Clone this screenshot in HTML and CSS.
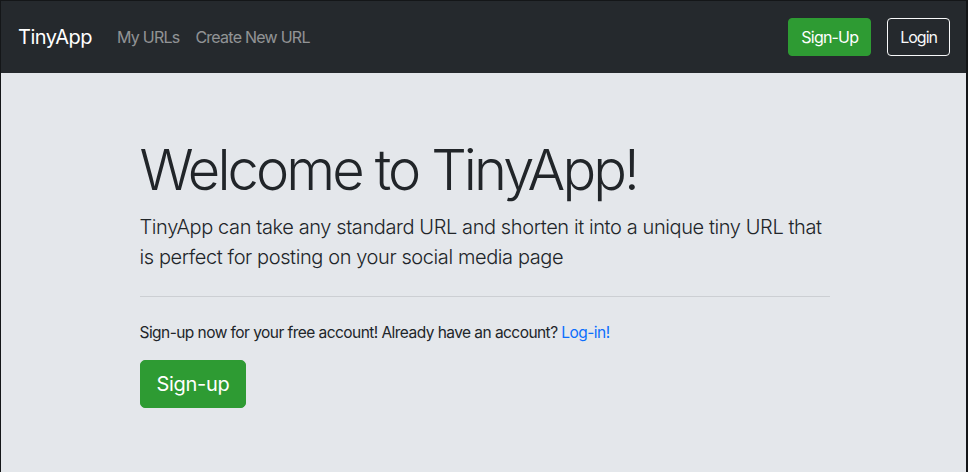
FILE: index.html
```html
<!DOCTYPE html>
<html lang="en">
<head>
<meta charset="utf-8">
<title>TinyApp</title>
<link rel="stylesheet" href="styles.css">
</head>
<body>
<div class="frame">
  <nav class="navbar">
    <a class="brand" href="#">TinyApp</a>
    <div class="nav-links">
      <a class="nav-link" href="#">My URLs</a>
      <a class="nav-link" href="#">Create New URL</a>
    </div>
    <div class="nav-actions">
      <a class="btn btn-success" href="#">Sign-Up</a>
      <a class="btn btn-outline-light" href="#">Login</a>
    </div>
  </nav>
  <main class="jumbotron">
    <div class="container">
      <h1 class="display">Welcome to TinyApp!</h1>
      <p class="lead">TinyApp can take any standard URL and shorten it into a unique tiny URL that is perfect for posting on your social media page</p>
      <hr class="divider">
      <p class="note">Sign-up now for your free account! Already have an account? <a class="link" href="#">Log-in!</a></p>
      <a class="btn btn-success btn-lg" href="#">Sign-up</a>
    </div>
  </main>
</div>
</body>
</html>
```
FILE: styles.css
```css
* { box-sizing: border-box; }
html, body { margin: 0; padding: 0; height: 100%; }
body {
  font-family: Inter, "Noto Sans", "Liberation Sans", sans-serif;
  font-size: 16px;
  line-height: 1.5;
  color: #212529;
  background: #e4e7eb;
}
.frame {
  min-height: 100%;
  display: flex;
  flex-direction: column;
  border-top: 1px solid #141618;
  border-left: 1px solid #141618;
  border-right: 2px solid #141618;
}
.navbar {
  display: flex;
  align-items: center;
  background: #25292d;
  padding: 16px 16px 16px 17px;
}
.brand {
  color: #fff;
  text-decoration: none;
  font-size: 20px;
  line-height: 30px;
  margin-right: 17px;
  padding: 5px 0;
  letter-spacing: -0.5px;
}
.nav-links { display: flex; }
.nav-link {
  color: rgba(255,255,255,0.5);
  text-decoration: none;
  padding: 8px;
  font-size: 16px;
  letter-spacing: -0.75px;
}
.nav-actions {
  margin-left: auto;
  display: flex;
  gap: 16px;
}
.btn {
  display: inline-block;
  text-decoration: none;
  border: 1px solid transparent;
  border-radius: 4px;
  padding: 6px 12px;
  font-size: 16px;
  line-height: 24px;
  letter-spacing: -0.8px;
}
.btn-success {
  background: #2e9b33;
  border-color: #2e9b33;
  color: #fff;
}
.btn-outline-light {
  border-color: #f8f9fa;
  color: #f8f9fa;
  letter-spacing: -1px;
}
.btn-lg {
  padding: 8px 16px;
  font-size: 20px;
  line-height: 30px;
  border-radius: 5px;
  letter-spacing: -0.3px;
}
.jumbotron {
  flex: 1;
  background: #e4e7eb;
  padding: 64px 0;
}
.container {
  width: 720px;
  margin: 0 auto;
  padding: 0 14px 0 16px;
}
.display {
  font-size: 56px;
  font-weight: 300;
  line-height: 1.2;
  margin: 0 0 8px;
  letter-spacing: -2.9px;
}
.lead {
  font-size: 20px;
  font-weight: 300;
  line-height: 30px;
  margin: 0 0 16px;
  letter-spacing: -0.4px;
}
.divider {
  border: 0;
  border-top: 1px solid rgba(0,0,0,0.1);
  margin: 24px 0;
}
.note {
  margin: 0 0 16px;
  letter-spacing: -0.55px;
  font-size: 15.5px;
}
.link { color: #0b6efd; text-decoration: none; }
```
